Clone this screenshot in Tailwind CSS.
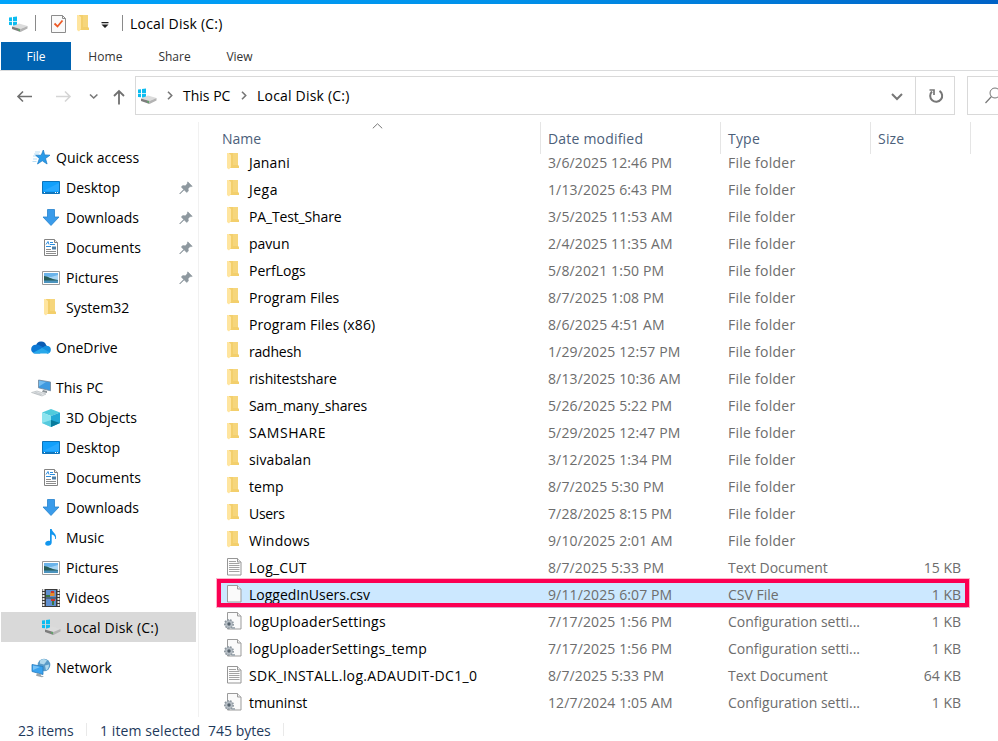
<!DOCTYPE html>
<html lang="en">

<head>
    <meta charset="UTF-8">
    <meta name="viewport" content="width=device-width, initial-scale=1.0">
    <title>Local Disk (C:)</title>
    <script src="https://cdn.jsdelivr.net/npm/@tailwindcss/browser@4"></script>
</head>

<body class="bg-white w-[998px] h-[741px] overflow-hidden flex flex-col font-['Open_Sans','Noto_Sans',sans-serif] text-[14px] leading-5 text-black whitespace-nowrap">
    <!-- icons -->
    <svg class="hidden">
        <symbol id="folder" viewBox="0 0 20 20">
            <path d="M5 1h9v12.500h1V16H5z" fill="#f3cf6c" />
            <path d="M9 1h5v12H9z" fill="#f6d67c" />
            <path d="M3 1h1.500L7 3v12l-2 2.500L3 16z" fill="#ffe59f" />
        </symbol>
        <symbol id="drive" viewBox="0 0 20 20">
            <path d="M1 2.600l3-.4v3.700H1zM5 2.100l4-.5v4.300H5zM1 6.800h3v3.500l-3-.4zM5 6.800h4v4.300l-4-.6z" fill="#0cbcf0" />
            <path d="M4 11.500L11 8.500l8.500 2.500-7 3z" fill="#dcdcdc" />
            <path d="M4 11.500l8.500 2.500v3L4 14z" fill="#7d7d7d" />
            <path d="M12.500 14l7-3v2.500L12.500 17z" fill="#b3b3b3" />
            <path d="M10.500 14.300l1.500.4v.9l-1.500-.4z" fill="#37e04c" />
        </symbol>
        <symbol id="star" viewBox="0 0 20 20">
            <path d="M12.300 2l1.400 4.900 5.300.3-4.500 3.300 1.600 5.500-4.800-3.200-4.800 3.200 1.900-5.600L4.500 7.200h5.700z" fill="#2b9be8" stroke="#1679c4" stroke-width=".7" />
            <path d="M4 4h5M3 6h5M2 8h3M2 11h4M1.500 13.500h4" stroke="#a5d4f2" stroke-width=".8" />
        </symbol>
        <symbol id="desktop" viewBox="0 0 20 20">
            <path d="M1.500 3.500h17v12h-17z" fill="#12a0fb" stroke="#0b74bc" />
            <path d="M2 13L18 5v8z" fill="#28a9ff" />
            <path d="M2 14h16v1H2z" fill="#1277bd" />
            <path d="M3 14.500h1M14 14.500h1M16 14.500h1" stroke="#fff" />
        </symbol>
        <symbol id="download" viewBox="0 0 20 20">
            <path d="M6.500 1.500h7V9h4.500l-8 8.500L2 9h4.500z" fill="#3a9bea" stroke="#2481cd" stroke-width=".8" />
        </symbol>
        <symbol id="doc" viewBox="0 0 20 20">
            <path d="M3.500 1.500h10l3 3v13h-13z" fill="#fff" stroke="#838383" />
            <path d="M13.500 1.500v3h3" fill="#eee" stroke="#838383" />
            <path d="M5 6.500l2-3 1 3M9 4.500h3M9 6.500h5M5 8.500h5" fill="none" stroke="#2b8dde" />
            <path d="M11 8.500h4v3h-4z" fill="#4d7fa8" />
            <path d="M5 11.500h5M5 13.500h10M5 15.500h10" stroke="#8d8d8d" />
        </symbol>
        <symbol id="picture" viewBox="0 0 20 20">
            <path d="M1.500 3.500h17v13h-17z" fill="#fff" stroke="#9b9b9b" />
            <path d="M3 5h14v10H3z" fill="#a9d6f5" />
            <path d="M3 5h14v2l-7 2-7-1z" fill="#6bb4ea" />
            <path d="M3 8c4 0 6 3 14 4v1H3z" fill="#285d59" />
            <path d="M3 12.500h14V15H3z" fill="#4c94be" />
        </symbol>
        <symbol id="cloud" viewBox="0 0 20 20">
            <path d="M5 8a5.300 5.300 0 0 1 10.300-.6L18 9l-8 4z" fill="#0a5cb3" />
            <path d="M4.500 15.500A4.300 4.300 0 0 1 4.500 6.800c2-.4 3.500 0 5.500 1.300l4 2.500L9 15.500z" fill="#0b78d4" />
            <path d="M10 10.500l4-2.600a4.200 4.200 0 0 1 3 .2A3.900 3.900 0 0 1 16.500 15.700z" fill="#1490df" />
            <path d="M2 14.700l9-4.600 7.500 4.200c-.7 1-1.500 1.300-2.500 1.300H4.500C3.500 15.600 2.700 15.400 2 14.700z" fill="#28a8ea" />
        </symbol>
        <symbol id="pc" viewBox="0 0 20 20">
            <path d="M7.500 2l12 2v8.800l-12-3z" fill="#3f9ae0" stroke="#73879a" stroke-width=".8" />
            <path d="M8 2.800L15 4l-7 4.500z" fill="#75bdf0" />
            <path d="M12 12l4 1v2l-5-1z" fill="#8c9499" />
            <path d="M.5 14.500L6 13l9 3-4 2z" fill="#e2e5e7" stroke="#b8bdc0" stroke-width=".7" />
            <path d="M4 14l7 2.500M3 15l7 2" stroke="#b0b6ba" stroke-width=".5" />
        </symbol>
        <symbol id="cube" viewBox="0 0 20 20">
            <path d="M10 1l9 3.500L10 8 1 4.500z" fill="#50cbdc" />
            <path d="M1 4.500L10 8v11l-9-4z" fill="#8ce4ef" />
            <path d="M10 8l9-3.500V15l-9 4z" fill="#23a9d6" />
            <path d="M10 12l9 3-9 4z" fill="#087b9c" />
            <path d="M1 15l9-3v7z" fill="#56c9dd" />
        </symbol>
        <symbol id="music" viewBox="0 0 20 20">
            <path d="M9 1h1.700c.5 3.500 5.300 4.500 4.300 10h-.8c.3-2.500-1.200-4-3.500-4.500v8c0 4-6.700 4.300-6.500 1 .2-2.500 3-3.200 4.800-2.500z" fill="#1296ee" />
        </symbol>
        <symbol id="video" viewBox="0 0 20 20">
            <path d="M1 1h18v18H1z" fill="#3b3b3b" />
            <path d="M2.500 1v18M17.500 1v18" stroke="#eee" stroke-width="2" stroke-dasharray="2 1" />
            <path d="M5 2h10v7.500H5zM5 10.500h10V18H5z" fill="#5f8fd0" />
            <path d="M9.500 4h4v4H9z" fill="#e58b2c" />
            <path d="M10 3h3v2h-3zM10 11h4v2h-4z" fill="#cc352b" />
            <path d="M5 7h4v2H5zM11 13h2v4h-2z" fill="#397542" />
        </symbol>
        <symbol id="network" viewBox="0 0 20 20">
            <circle cx="13" cy="7" r="6.300" fill="#5b9cc8" />
            <path d="M9 2.500q4-3 7 0l-3 4-4-1zM14 7.500l4-1q0 4-3 6z" fill="#b1d9ed" />
            <path d="M1 6.500l11 2v8L1 13.500z" fill="#39a2ef" stroke="#277bbd" stroke-width=".8" />
            <path d="M2 7.500l7 1.500-7 3z" fill="#78c3f7" />
            <path d="M6 15l4 1.200v1.500l3 .6-2 1-6-1.600z" fill="#9aa7af" />
        </symbol>
        <symbol id="text" viewBox="0 0 20 20">
            <path d="M3.500 1.500h10L17 5v13H3.500z" fill="#fdfdfd" stroke="#969696" />
            <path d="M13.500 1.500V5H17" fill="#eee" stroke="#969696" />
            <path d="M5 4.500h7M5 6.500h10.500M5 8.500h10.500M5 10.500h10.500M5 12.500h10.500M5 14.500h10.500" stroke="#a3a3a3" />
        </symbol>
        <symbol id="blank" viewBox="0 0 20 20">
            <path d="M3.500 1.500h10L17 5v13H3.500z" fill="#fafafa" stroke="#9b9b9b" />
            <path d="M13.500 1.500V5H17" fill="#eee" stroke="#9b9b9b" />
        </symbol>
        <symbol id="config" viewBox="0 0 20 20">
            <path d="M3.500 1.500h10L17 5v13H3.500z" fill="#fafafa" stroke="#9b9b9b" />
            <path d="M13.500 1.500V5H17" fill="#eee" stroke="#9b9b9b" />
            <circle cx="5" cy="13" r="4.200" fill="#b5bdc4" stroke="#8d979f" stroke-width="1.600" stroke-dasharray="1.700 1.200" />
            <circle cx="5" cy="13" r="1.700" fill="#56636e" />
            <path d="M8 17h3" stroke="#a6afb6" stroke-width="2" />
        </symbol>
        <symbol id="pin" viewBox="0 0 14 14">
            <path d="M8.800.8l4.500 4.500-1.500.5-.7-.3-2 2.200.3 2.300-1.700 1.500-2.500-2.600L1 13l-.4-.4 4-4.200L2.300 6 3.700 4.500l2.600.3 2-2-.1-.8z" fill="#8e989f" stroke="#8e989f" stroke-width=".5" />
        </symbol>
    </svg>

    <div class="h-1 shrink-0 bg-linear-to-r from-[#00a4fb] via-[#0091ea] to-[#0062c6]"></div>

    <!-- title bar -->
    <div class="h-[38px] shrink-0 flex items-center pl-2 pb-px">
        <svg class="size-5 mt-1"><use href="#drive" /></svg>
        <div class="w-px h-4 bg-[#8a8a8a] mt-px ml-[7px]"></div>
        <svg class="w-[15px] h-[19px] ml-[15px] mt-[3px]" viewBox="0 0 15 19">
            <path d="M.5.500h11l3 3v14H.5z" fill="#fafafa" stroke="#8c8c8c" />
            <path d="M11.500.500v3h3" fill="none" stroke="#8c8c8c" />
            <path d="M3.500 8.500l3 3 5-6" fill="none" stroke="#ed5b27" stroke-width="1.800" />
        </svg>
        <svg class="size-5 ml-[8px] mt-[3px]"><use href="#folder" /></svg>
        <svg class="w-2 h-[6px] ml-[7px] mt-[5px] mr-px" viewBox="0 0 8 6">
            <path d="M.5 0h7v1.200h-7zM.5 2.500h7L4 6z" fill="#222" />
        </svg>
        <div class="w-px h-4 bg-[#8a8a8a] mt-px ml-[12px] mr-[7px]"></div>
        <span class="mt-[2px] tracking-[0.2px]">Local Disk (C:)</span>
    </div>

    <!-- ribbon tabs -->
    <div class="h-[29px] shrink-0 flex pl-px border-b border-[#dadbdc] text-[12px] leading-[30px] text-[#333]">
        <div class="w-[70px] h-7 bg-[#0063b1] text-white text-center">File</div>
        <div class="w-[69px] text-center tracking-[0.15px]">Home</div>
        <div class="w-[69px] text-center">Share</div>
        <div class="w-[61px] text-center">View</div>
    </div>

    <!-- address bar -->
    <div class="h-[51px] shrink-0 flex pt-[5px]">
        <svg class="w-[135px] h-[39px] shrink-0" viewBox="0 0 135 39" fill="none">
            <path d="M32 20.500H18M23 15.500l-5 5 5 5" stroke="#707070" stroke-width="1.600" />
            <path d="M56 20.500h14M65 15.500l5 5-5 5" stroke="#d5d5d5" stroke-width="1.600" />
            <path d="M90 18.500l3.700 3.500 3.700-3.500" stroke="#777" stroke-width="1.600" />
            <path d="M119 28.500V15M114 20l5-5 5 5" stroke="#707070" stroke-width="1.800" />
        </svg>
        <div class="w-[820px] h-[39px] shrink-0 border border-[#d9d9d9] flex items-center">
            <svg class="size-5 ml-px mt-[2px]"><use href="#drive" /></svg>
            <svg class="w-[6px] h-[9px] ml-[10px] -mt-px" viewBox="0 0 6 9" fill="none"><path d="M1 .8l3.700 3.700L1 8.200" stroke="#777" stroke-width="1.600" /></svg>
            <span class="w-[57px] ml-[10px]">This PC</span>
            <svg class="w-[6px] h-[9px] ml-px -mt-px" viewBox="0 0 6 9" fill="none"><path d="M1 .8l3.700 3.700L1 8.200" stroke="#777" stroke-width="1.600" /></svg>
            <span class="ml-[10px] tracking-[0.2px]">Local Disk (C:)</span>
            <svg class="w-3 h-2 ml-auto mr-3 mt-[3px]" viewBox="0 0 12 8" fill="none"><path d="M1 1l5 5 5-5" stroke="#777" stroke-width="2" /></svg>
            <div class="w-[39px] h-full border-l border-[#d9d9d9] flex items-center justify-center">
                <svg class="w-4 h-4 ml-[2px]" viewBox="0 0 16 16" fill="none">
                    <path d="M11.500 2.800A6 6 0 1 1 4 3.500" stroke="#777" stroke-width="2" />
                    <path d="M1.500 2H6v5" stroke="#777" stroke-width="1.700" />
                </svg>
            </div>
        </div>
        <div class="w-[40px] h-[39px] shrink-0 ml-3 border border-[#d9d9d9] flex items-center">
            <svg class="w-[17px] h-[17px] ml-[17px]" viewBox="0 0 17 17" fill="none">
                <circle cx="10" cy="6" r="5" stroke="#777" />
                <path d="M6.500 9.500L.5 16" stroke="#777" stroke-width="1.200" />
            </svg>
        </div>
    </div>

    <div class="h-[595px] shrink-0 flex">
        <div id="sidebar" class="w-[199px] shrink-0 border-r border-[#f1f1f1] pt-[21px]"></div>

        <div class="relative w-[799px] shrink-0">
            <!-- column headings -->
            <svg class="absolute left-[173px] top-px w-[11px] h-[6px]" viewBox="0 0 11 6" fill="none"><path d="M.8 5.300L5.500.8l4.700 4.500" stroke="#777" /></svg>
            <div class="h-8 flex text-[#4c607a] leading-[33px] tracking-[0.2px]">
                <div class="w-[342px] pl-[23px] border-r border-[#e5e5e5] tracking-normal">Name</div>
                <div class="w-[180px] pl-[7px] border-r border-[#e5e5e5]">Date modified</div>
                <div class="w-[150px] pl-[7px] border-r border-[#e5e5e5]">Type</div>
                <div class="w-[100px] pl-[7px] border-r border-[#e5e5e5]">Size</div>
            </div>
            <div id="files" class="-mt-[5px]"></div>
            <div class="absolute left-[18px] top-[457px] w-[752px] h-[28px] border-4 border-[#fb0052] outline outline-[#fb0052]/30"></div>
        </div>
    </div>

    <!-- status bar -->
    <div class="flex items-center h-[28px] mt-px pl-[18px] text-[#1e395b]">
        <span class="w-[68px] mt-[2px]">23 items</span>
        <div class="w-px h-[13px] bg-[#e9e9e9]"></div>
        <span class="w-[108px] mt-[2px] ml-[13px] tracking-[0.1px]">1 item selected</span>
        <span class="w-[75px] mt-[2px]">745 bytes</span>
        <div class="w-px h-[13px] bg-[#e9e9e9]"></div>
    </div>

    <script>
        // icon, label, pinned
        const groups = [
            [["star", "Quick access"], ["desktop", "Desktop", true], ["download", "Downloads", true], ["doc", "Documents", true], ["picture", "Pictures", true], ["folder", "System32"]],
            [["cloud", "OneDrive"]],
            [["pc", "This PC"], ["cube", "3D Objects"], ["desktop", "Desktop"], ["doc", "Documents"], ["download", "Downloads"], ["music", "Music"], ["picture", "Pictures"], ["video", "Videos"], ["drive", "Local Disk (C:)"]],
            [["network", "Network"]],
        ];

        // icon, name, date, type, size, letter spacing of the name
        const files = [
            ["folder", "Janani", "3/6/2025 12:46 PM", "File folder", "", "tracking-[0.15px]"],
            ["folder", "Jega", "1/13/2025 6:43 PM", "File folder", "", "tracking-[0.5px]"],
            ["folder", "PA_Test_Share", "3/5/2025 11:53 AM", "File folder", "", "tracking-[-0.15px]"],
            ["folder", "pavun", "2/4/2025 11:35 AM", "File folder", "", "tracking-normal"],
            ["folder", "PerfLogs", "5/8/2021 1:50 PM", "File folder", "", "tracking-normal"],
            ["folder", "Program Files", "8/7/2025 1:08 PM", "File folder", "", "tracking-[0.1px]"],
            ["folder", "Program Files (x86)", "8/6/2025 4:51 AM", "File folder", "", "tracking-[0.1px]"],
            ["folder", "radhesh", "1/29/2025 12:57 PM", "File folder", "", "tracking-[-0.2px]"],
            ["folder", "rishitestshare", "8/13/2025 10:36 AM", "File folder", "", "tracking-[-0.1px]"],
            ["folder", "Sam_many_shares", "5/26/2025 5:22 PM", "File folder", "", "tracking-[-0.15px]"],
            ["folder", "SAMSHARE", "5/29/2025 12:47 PM", "File folder", "", "tracking-[0.6px]"],
            ["folder", "sivabalan", "3/12/2025 1:34 PM", "File folder", "", "tracking-[0.1px]"],
            ["folder", "temp", "8/7/2025 5:30 PM", "File folder", "", "tracking-[0.1px]"],
            ["folder", "Users", "7/28/2025 8:15 PM", "File folder", "", "tracking-[-0.3px]"],
            ["folder", "Windows", "9/10/2025 2:01 AM", "File folder", "", "tracking-[0.2px]"],
            ["text", "Log_CUT", "8/7/2025 5:33 PM", "Text Document", "15 KB", "tracking-[0.2px]"],
            ["blank", "LoggedInUsers.csv", "9/11/2025 6:07 PM", "CSV File", "1 KB", "tracking-normal"],
            ["config", "logUploaderSettings", "7/17/2025 1:56 PM", "Configuration setti...", "1 KB", "tracking-[0.25px]"],
            ["config", "logUploaderSettings_temp", "7/17/2025 1:56 PM", "Configuration setti...", "1 KB", "tracking-[0.22px]"],
            ["text", "SDK_INSTALL.log.ADAUDIT-DC1_0", "8/7/2025 5:33 PM", "Text Document", "64 KB", "tracking-[0.35px]"],
            ["config", "tmuninst", "12/7/2024 1:05 AM", "Configuration setti...", "1 KB", "tracking-[-0.1px]"],
        ];

        document.querySelector("#sidebar").innerHTML = groups.map(items => `<div class="flex flex-col mb-[10px]">` + items.map(([icon, label, pinned], i) => `
            <div class="h-[30px] w-[195px] ml-px flex items-center gap-[5px] ${i ? "pl-10" : "pl-[30px]"} ${label == "Local Disk (C:)" ? "bg-[#d9d9d9] tracking-[0.2px] -mt-px mb-px pt-px" : ""}">
                <svg class="size-5 shrink-0"><use href="#${icon}" /></svg>
                <span>${label}</span>
                ${pinned ? `<svg class="size-[14px] ml-auto mr-[3px] -mt-px"><use href="#pin" /></svg>` : ""}
            </div>`).join("") + `</div>`).join("");

        document.querySelector("#files").innerHTML = files.map(([icon, name, date, type, size, spacing]) => `
            <div class="h-[27px] w-[748px] ml-5 flex items-center text-[#6d6d6d] ${icon == "blank" ? "bg-[#cce8ff]" : ""}">
                <svg class="size-5 ml-[5px] shrink-0 overflow-visible ${icon == "folder" ? "-mt-px" : "-mt-[2px]"}"><use href="#${icon}" /></svg>
                <span class="w-[304px] shrink-0 pl-[5px] text-black ${spacing}">${name}</span>
                <span class="w-[180px] shrink-0 tracking-[0.12px]">${date}</span>
                <span class="w-[150px] shrink-0 ${icon == "folder" ? "tracking-[0.25px]" : ""}">${type}</span>
                <span class="w-[83px] shrink-0 text-right">${size}</span>
            </div>`).join("");
    </script>
</body>

</html>
